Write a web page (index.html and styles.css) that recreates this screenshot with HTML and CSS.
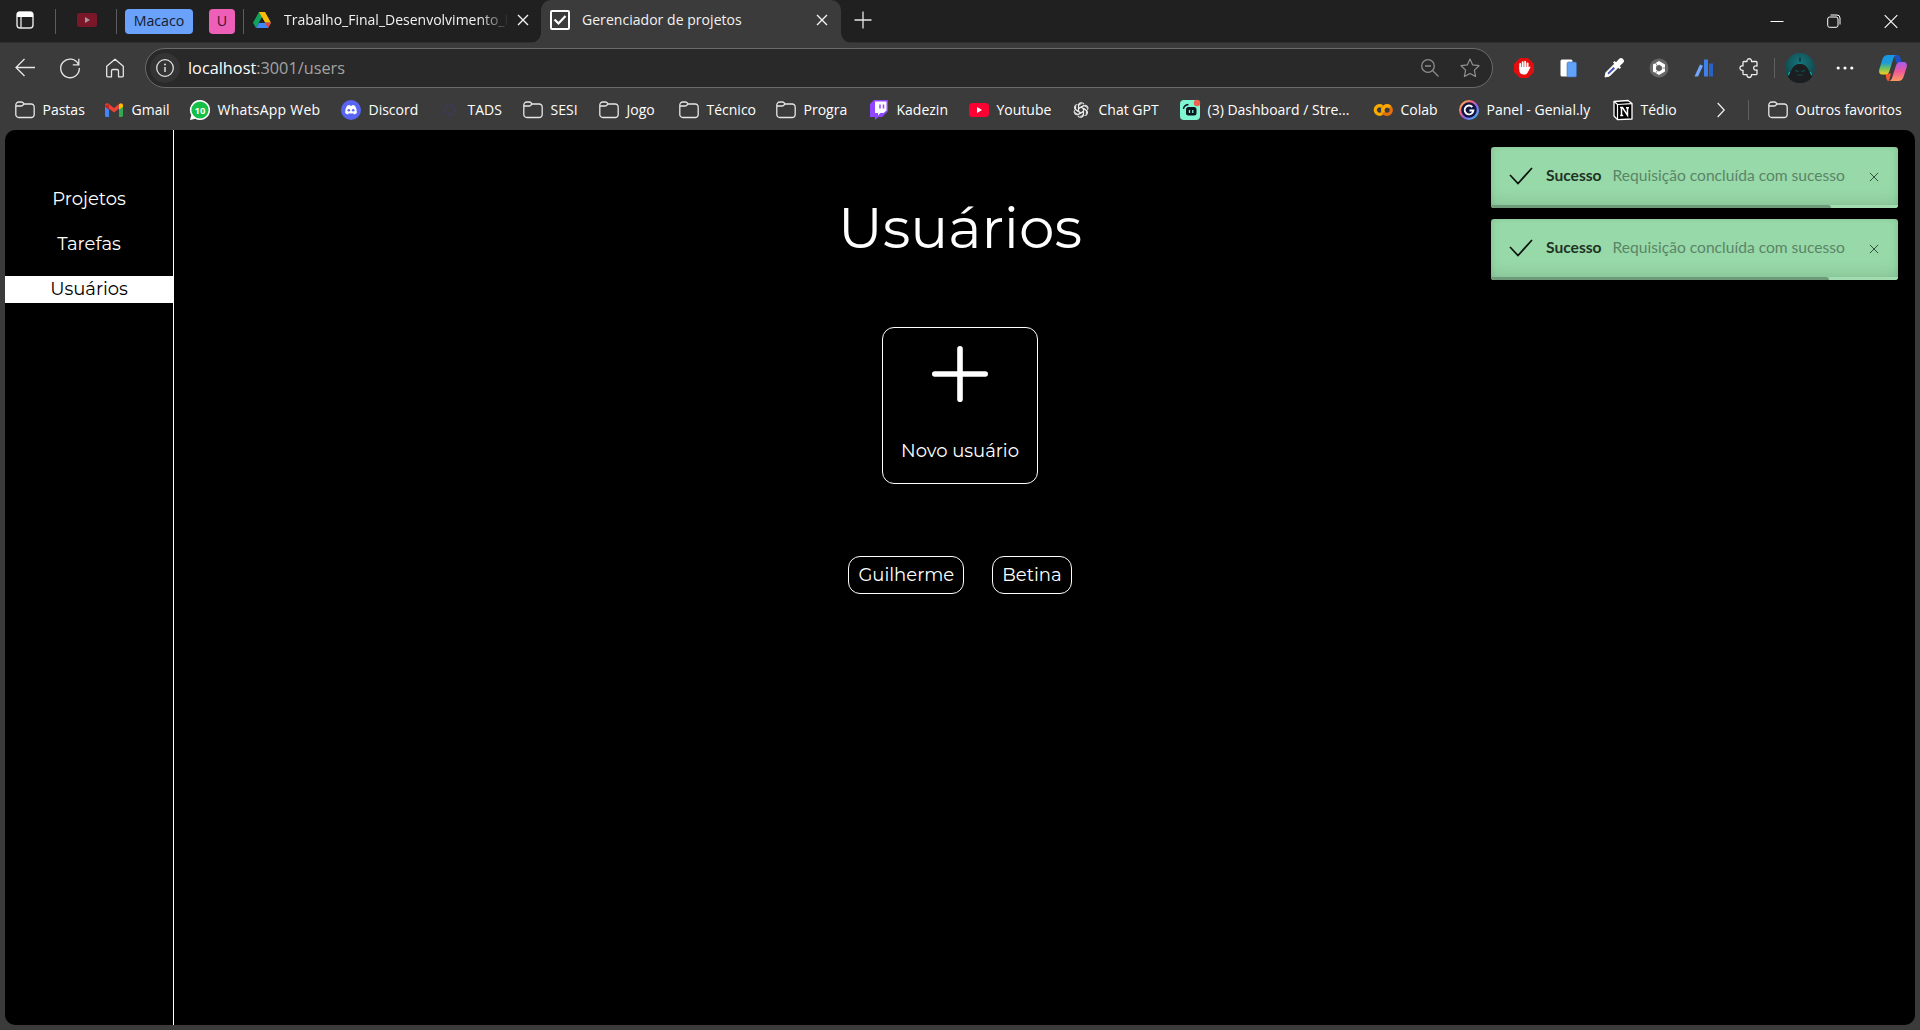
FILE: index.html
```html
<!DOCTYPE html>
<html lang="pt-BR">
<head>
<meta charset="utf-8">
<title>Gerenciador de projetos</title>
<link rel="stylesheet" href="styles.css">
</head>
<body>
<svg class="defs" width="0" height="0">
  <defs>
    <symbol id="folder" viewBox="0 0 20 20"><path d="M.8 5a3 3 0 0 1 3-3h2.700c.7 0 1.100.3 1.500.7l1.300 1.300H16a3 3 0 0 1 3.200 3v7.500a3 3 0 0 1-3.200 3H3.800a3 3 0 0 1-3-3zM.8 6h5.200c.8 0 1.200-.2 1.700-.7L9.300 4" fill="none" stroke="#e6e6e6" stroke-width="1.300"/></symbol>
    <symbol id="x" viewBox="0 0 12 12"><path d="M1 1l10 10M11 1L1 11" fill="none" stroke="currentColor" stroke-width="1.400"/></symbol>
    <linearGradient id="rainbow" x1="0" y1="0" x2="1" y2="1"><stop offset="0" stop-color="#f7c64a"/><stop offset=".35" stop-color="#f0617e"/><stop offset=".6" stop-color="#8a63f5"/><stop offset="1" stop-color="#37c8f0"/></linearGradient>
    <linearGradient id="cop1" x1="0" y1="0" x2="0" y2="1"><stop offset="0" stop-color="#1596e4"/><stop offset=".4" stop-color="#1f9bd8"/><stop offset=".7" stop-color="#74c35c"/><stop offset="1" stop-color="#f5d020"/></linearGradient>
    <linearGradient id="cop2" x1="0" y1="0" x2="0" y2="1"><stop offset="0" stop-color="#a55bf0"/><stop offset=".5" stop-color="#f0589a"/><stop offset="1" stop-color="#ff9a5d"/></linearGradient>
    <radialGradient id="face" cx=".5" cy=".35" r=".7"><stop offset="0" stop-color="#15777d"/><stop offset="1" stop-color="#123c40"/></radialGradient>
  </defs>
</svg>

<div class="window">
  <header class="tabstrip">
    <div class="tools">
      <svg class="workspace" width="20" height="20" viewBox="0 0 20 20"><rect x="2" y="2" width="16" height="16" rx="3" fill="none" stroke="#e6e6e6" stroke-width="1.400"/><path d="M2 7V4.500A2.500 2.500 0 0 1 4.500 2h11A2.500 2.500 0 0 1 18 4.500V7z" fill="#fff"/><path d="M6 7v11" stroke="#e6e6e6" stroke-width="1.300"/></svg>
      <i class="sep"></i>
      <svg class="pinned" width="20" height="14" viewBox="0 0 20 14"><rect width="20" height="14" rx="3" fill="#7c1629"/><path d="M8 4l5 3-5 3z" fill="#a8969a"/></svg>
      <i class="sep"></i>
      <span class="group blue">Macaco</span>
      <span class="group pink">U</span>
      <i class="sep last"></i>
    </div>
    <div class="tab">
      <svg width="18" height="16" viewBox="0 0 18 16"><path d="M6 0h6L9 5.400 3 16 0 10.700z" fill="#12a15b"/><path d="M6 0h6l6 10.700h-6z" fill="#fbbc05"/><path d="M6 10.700h12L15 16H3z" fill="#4285f4"/><path d="M12 10.700h6L15 16z" fill="#ea4335"/><path d="M9 5.400l3 5.300H6z" fill="#202020"/></svg>
      <span class="tab-title faded">Trabalho_Final_Desenvolvimento_F</span>
      <svg class="tab-close" width="12" height="12"><use href="#x"/></svg>
    </div>
    <div class="tab active">
      <svg width="20" height="20" viewBox="0 0 20 20"><rect x="1" y="1" width="18" height="18" rx="1" fill="none" stroke="#fff" stroke-width="2"/><path d="M4.500 9.500l4 4 7-7.500" fill="none" stroke="#fff" stroke-width="2.200"/></svg>
      <span class="tab-title">Gerenciador de projetos</span>
      <svg class="tab-close" width="12" height="12"><use href="#x"/></svg>
    </div>
    <svg class="newtab" width="18" height="18" viewBox="0 0 18 18"><path d="M9 .5v17M.5 9h17" stroke="#e6e6e6" stroke-width="1.300"/></svg>
    <div class="controls">
      <svg width="14" height="14" viewBox="0 0 14 14"><path d="M.5 7.500h13" stroke="#fff"/></svg>
      <svg width="14" height="14" viewBox="0 0 14 14"><g fill="none" stroke="#fff"><rect x=".7" y="3" width="10.300" height="10.300" rx="2"/><path d="M3.500 1h6.500a3 3 0 0 1 3 3v6.500"/></g></svg>
      <svg width="14" height="14" viewBox="0 0 14 14"><path d="M.7 1.200l12.600 12.600M13.300 1.200L.7 13.800" stroke="#fff" stroke-width="1.100"/></svg>
    </div>
  </header>

  <nav class="toolbar">
    <div class="nav-icons">
      <svg width="20" height="20" viewBox="0 0 20 20"><path d="M20 9.500H1M9.500 1L1 9.500 9.500 18" fill="none" stroke="#e6e6e6" stroke-width="1.300"/></svg>
      <svg width="20" height="20" viewBox="0 0 20 20"><path d="M18.500 6.600A9.300 9.300 0 1 0 19.300 10M18.800.8v6h-6" fill="none" stroke="#e6e6e6" stroke-width="1.300"/></svg>
      <svg width="20" height="20" viewBox="0 0 20 20"><path d="M10 1.200L1.700 8.300V18c0 .6.300.8.800.8h4V13c0-1 .5-1.500 1.500-1.500h4c1 0 1.500.5 1.500 1.500v5.800h4c.5 0 .8-.2.800-.8V8.300z" fill="none" stroke="#e6e6e6" stroke-width="1.300" stroke-linejoin="round"/></svg>
    </div>
    <div class="address">
      <span class="info"><svg width="18" height="18" viewBox="0 0 18 18"><circle cx="9" cy="9" r="8.300" fill="none" stroke="#e0e0e0" stroke-width="1.300"/><path d="M9 8v5" stroke="#e0e0e0" stroke-width="1.500"/><circle cx="9" cy="5.500" r="1" fill="#e0e0e0"/></svg></span>
      <span class="url"><b>localhost</b>:3001/users</span>
      <svg class="mag" width="18" height="18" viewBox="0 0 18 18"><path d="M11.500 11.500l6 6M4 7h6" stroke="#8c8c8c" stroke-width="1.300"/><circle cx="7" cy="7" r="6.300" fill="none" stroke="#8c8c8c" stroke-width="1.300"/></svg>
      <svg width="20" height="20" viewBox="0 0 20 20"><path d="M10 1l2.700 5.900 6.300.8-4.600 4.400 1.200 6.400L10 15.400l-5.600 3.100 1.200-6.400L1 7.700l6.300-.8z" fill="none" stroke="#909090" stroke-width="1.200" stroke-linejoin="round"/></svg>
    </div>
    <div class="extensions">
      <svg width="20" height="20" viewBox="0 0 20 20"><path d="M6 0h8l6 6v8l-6 6H6l-6-6V6z" fill="#e40d0d"/><path d="M6.200 10V6M8.700 10V4.200M11.200 10V3.800M13.600 10V5.500" stroke="#fff" stroke-width="1.900" stroke-linecap="round"/><path d="M5.300 9h9.200l1.200-.6c.8 0 .9.700.5 1.300L14 14c-.8 1.700-2 2.600-4 2.600-3 0-4.700-1.600-4.700-4.600z" fill="#fff"/></svg>
      <svg width="20" height="20" viewBox="0 0 20 20"><rect x="1.500" y="1.500" width="12" height="17" rx="1.500" fill="#fff"/><rect x="8" y="4" width="9.500" height="15" rx="1.500" fill="#62a2f8" stroke="#3b6fb8" stroke-width=".6"/></svg>
      <svg width="20" height="20" viewBox="0 0 20 20"><path d="M1 19l1-4.500L11 5.500l3.500 3.500-9 9z" fill="#fff" stroke="#fff"/><path d="M4.500 16.500l-1-1.500 6-6 1.500 1.500z" fill="#3b50b8"/><path d="M9 4.500l6.500 6.500 1.500-1.500-1.200-1.500L19 5a2.600 2.600 0 0 0-4-4l-3 3.200L10.500 3z" fill="#fff"/></svg>
      <svg width="20" height="20" viewBox="0 0 20 20"><circle cx="10" cy="10" r="9.500" fill="#666"/><path d="M10 3l6 3.500v7L10 17l-6-3.500v-7z" fill="#fff"/><path d="M10 6.700l2.900 1.700v3.400L10 13.500l-2.900-1.700V8.400z" fill="#5c5c5c"/><path d="M5.500 3.500l3 4.500M16.500 10h-3M5.500 16.500l3-4" stroke="#666" stroke-width=".8"/></svg>
      <svg width="20" height="20" viewBox="0 0 20 20"><path d="M6 6.500l3 1.300L4 18.500H.5z" fill="#71a7ff"/><path d="M10 1.500h4v17h-4z" fill="#3e80ee"/><path d="M15 5.500h4v13h-4z" fill="#2a62c4"/></svg>
      <svg width="20" height="20" viewBox="0 0 20 20"><path d="M5 3.500h3c-.5-3.700 5-3.700 4.500 0H17c.7 0 1 .3 1 1V8c-4.500-1-4.500 5 0 4v3.500c0 .8-.3 1.200-1 1.200h-4.500c.5 3.700-5 3.700-4.500 0H5c-.7 0-1-.4-1-1.200V12.300c-4 .5-4-5 0-4.500V4.500c0-.7.3-1 1-1z" fill="none" stroke="#ececec" stroke-width="1.300" stroke-linejoin="round"/></svg>
    </div>
    <i class="tool-sep"></i>
    <svg class="avatar" width="30" height="30" viewBox="0 0 30 30"><circle cx="15" cy="15" r="15" fill="url(#face)"/><path d="M3 24l4-8c2-4 5-5 8-5s6 1 8 5l4 8c-3 4-7 6-12 6S6 28 3 24z" fill="#1b1d1e"/><path d="M10 17q2 2 4 1m2 0q2 1 4-1M12 22h6" fill="none" stroke="#12484c" stroke-width="1.200"/><path d="M15 4.500v4" stroke="#123033" stroke-width="1.500"/><path d="M3.500 22l1-3M26.500 22l-1-3" stroke="#15b5bd"/></svg>
    <svg class="dots" width="18" height="4" viewBox="0 0 18 4"><g fill="#fff"><circle cx="2.200" cy="2" r="1.600"/><circle cx="9" cy="2" r="1.600"/><circle cx="15.800" cy="2" r="1.600"/></g></svg>
    <svg class="copilot" width="28" height="26" viewBox="0 0 28 26"><path d="M15 0h3c2 0 3 1 3.500 3l1.200 4.500H17z" fill="#1c4fc4"/><path d="M6.500 18.500h5.500L10 26c-1.500 0-2.200-.8-2.700-2.500z" fill="#f4572f"/><path d="M18 0c-2 0-3 1-3.700 3.500L10.500 16c-.9 2.500-2 3.500-4.500 3.500H3.500C.8 19.500-.5 17.500.3 14.500l3-10C4.300 1.500 6 0 9 0z" fill="url(#cop1)"/><path d="M9.500 26c2 0 3-1 3.700-3.500L17 10.500c.9-2.500 2-3.500 4.500-3.500h3c2.700 0 4 2 3.200 5l-3 9.500c-1 3-2.700 4.500-5.700 4.500z" fill="url(#cop2)"/></svg>
  </nav>

  <nav class="bookmarks">
    <a><svg width="20" height="20"><use href="#folder"/></svg>Pastas</a>
    <a><svg width="20" height="20" viewBox="0 0 20 20"><path d="M1 5l4 3v9H2.300C1.400 17 1 16.500 1 15.800z" fill="#4285f4"/><path d="M15 8l4-3v10.800c0 .7-.4 1.200-1.300 1.200H15z" fill="#34a853"/><path d="M1 5.500C1 3.500 3 2.700 4.500 3.800L10 8l5.500-4.200C17 2.700 19 3.500 19 5.500l-9 7z" fill="#ea4335"/><path d="M15 4.200C17 2.700 19 3.500 19 5.500v1.300l-4 3z" fill="#fbbc04"/><path d="M1 5.500v1.300l4 3V4.200z" fill="#c5221f"/></svg>Gmail</a>
    <a class="wide"><svg width="20" height="20" viewBox="0 0 20 20"><path d="M10 0a10 10 0 1 1-4.800 18.700L0 20l1.300-5A10 10 0 0 1 10 0z" fill="#fff"/><circle cx="10" cy="10" r="8.600" fill="#14c047"/><text class="badge" x="10" y="13.700" text-anchor="middle">10</text></svg>WhatsApp Web</a>
    <a><svg width="20" height="20" viewBox="0 0 20 20"><circle cx="10" cy="10" r="10" fill="#5865f2"/><path d="M6 5.800q1.300-.7 2.600-.8l.4.800h2l.4-.8q1.300.1 2.600.8 2.200 3.500 1.900 7.200-1.500 1.200-3 1.500l-.7-1.200q-2.200.5-4.400 0l-.7 1.200q-1.500-.3-3-1.500Q3.800 9.300 6 5.800z" fill="#fff"/><circle cx="7.800" cy="10.300" r="1.300" fill="#5865f2"/><circle cx="12.200" cy="10.300" r="1.300" fill="#5865f2"/></svg>Discord</a>
    <a><svg width="20" height="20" viewBox="0 0 20 20"><circle cx="9.500" cy="10" r="4.800" fill="none" stroke="#3f3a58" stroke-width="3" stroke-dasharray="2 1.770"/></svg>TADS</a>
    <a><svg width="20" height="20"><use href="#folder"/></svg>SESI</a>
    <a><svg width="20" height="20"><use href="#folder"/></svg>Jogo</a>
    <a><svg width="20" height="20"><use href="#folder"/></svg>Técnico</a>
    <a><svg width="20" height="20"><use href="#folder"/></svg>Progra</a>
    <a><svg width="20" height="20" viewBox="0 0 20 20"><path d="M5 0h14v11l-6 6h-3.500L6 20v-3H1V4z" fill="#9146ff"/><path d="M6 1.500h11.500v9L14.500 13h-3L9 15.500V13H6z" fill="#fff"/><path d="M11 4.500v4M14.500 4.500v4" stroke="#9146ff" stroke-width="1.500"/></svg>Kadezin</a>
    <a><svg width="20" height="20" viewBox="0 0 20 20"><rect y="3" width="20" height="14" rx="3.500" fill="#f03"/><path d="M8 7l5 3-5 3z" fill="#fff"/></svg>Youtube</a>
    <a><svg width="20" height="20" viewBox="0 0 20 20"><g transform="translate(1.200 1.200) scale(.88)" fill="none" stroke="#e8e8e8" stroke-width="1.300"><path id="petal" d="M7.200 12V5.200a3.300 3.300 0 0 1 6.200-1.700M7.200 8.300l4.700-2.700a3.300 3.300 0 0 1 4.700 1.700"/><use href="#petal" transform="rotate(60 10 10)"/><use href="#petal" transform="rotate(120 10 10)"/><use href="#petal" transform="rotate(180 10 10)"/><use href="#petal" transform="rotate(240 10 10)"/><use href="#petal" transform="rotate(300 10 10)"/></g></svg>Chat GPT</a>
    <a><svg width="20" height="20" viewBox="0 0 20 20"><rect width="20" height="20" rx="4" fill="#80f5d2"/><rect x="6" y="7" width="10.500" height="8.500" rx="2.500" fill="#09161d"/><path d="M3.500 9q.5-4 5-4.500" fill="none" stroke="#09161d" stroke-width="1.400"/><path d="M9.500 10v3M12.800 10v3" stroke="#80f5d2" stroke-width="1.300"/><circle cx="17" cy="3" r="3.200" fill="#f0604d"/></svg>(3) Dashboard / Stre...</a>
    <a><svg width="20" height="20" viewBox="0 0 20 20"><g fill="none" stroke-width="3.200"><path d="M9.300 13.300a4.300 4.300 0 1 1 0-6.600" stroke="#f9ab00"/><circle cx="14" cy="10" r="4.300" stroke="#e8710a"/><path d="M10.500 12.500A4.300 4.300 0 0 1 17 7" stroke="#f9ab00"/></g></svg>Colab</a>
    <a><svg width="20" height="20" viewBox="0 0 20 20"><circle cx="10" cy="10" r="8.900" fill="#10153f" stroke="url(#rainbow)" stroke-width="2.200"/><path d="M13.300 7A4.400 4.400 0 1 0 14.400 10.500H10.500" fill="none" stroke="#fff" stroke-width="1.900"/></svg>Panel - Genial.ly</a>
    <a><svg width="20" height="20" viewBox="0 0 20 20"><path d="M1 1.500L15 .5l4 3V19L4.500 19.600 1 16z" fill="#000" stroke="#fff" stroke-width="1.300" stroke-linejoin="round"/><path d="M1 1.500l3.500 3L19 3.700M4.500 4.500v15" fill="none" stroke="#fff" stroke-width="1.200"/><path d="M7.200 15.500h3M8.500 15.500V8M7 7.500h2.500l5 7.800V8M13 7.700h3" fill="none" stroke="#fff" stroke-width="1.500"/></svg>Tédio</a>
    <svg class="more" width="8" height="16" viewBox="0 0 8 16"><path d="M.7 1l6.500 7-6.500 7" fill="none" stroke="#ececec" stroke-width="1.300"/></svg>
    <i class="mark-sep"></i>
    <a><svg width="20" height="20"><use href="#folder"/></svg>Outros favoritos</a>
  </nav>

  <div class="page">
    <aside class="sidebar">
      <a>Projetos</a>
      <a>Tarefas</a>
      <a class="current">Usuários</a>
    </aside>
    <main class="content">
      <h1>Usuários</h1>
      <button class="new-user">
        <svg width="56" height="56" viewBox="0 0 56 56"><path d="M28 2.800v50.400M2.800 28h50.400" stroke="#fff" stroke-width="5.600" stroke-linecap="round"/></svg>
        <span>Novo usuário</span>
      </button>
      <div class="users">
        <span class="user">Guilherme</span>
        <span class="user">Betina</span>
      </div>
    </main>
    <section class="toasts">
      <div class="toast">
        <svg width="24" height="18" viewBox="0 0 24 18"><path d="M1 8l8 8.500L23 1" fill="none" stroke="#0c120e" stroke-width="1.700"/></svg>
        <strong>Sucesso</strong><span class="message">Requisição concluída com sucesso</span>
        <svg class="dismiss" width="10" height="10" viewBox="0 0 12 12"><path d="M1 1l10 10M11 1L1 11" stroke="#34503c" stroke-width="1.200"/></svg>
        <div class="progress"><div style="width:83.500%"></div></div>
      </div>
      <div class="toast">
        <svg width="24" height="18" viewBox="0 0 24 18"><path d="M1 8l8 8.500L23 1" fill="none" stroke="#0c120e" stroke-width="1.700"/></svg>
        <strong>Sucesso</strong><span class="message">Requisição concluída com sucesso</span>
        <svg class="dismiss" width="10" height="10" viewBox="0 0 12 12"><path d="M1 1l10 10M11 1L1 11" stroke="#34503c" stroke-width="1.200"/></svg>
        <div class="progress"><div style="width:83%"></div></div>
      </div>
    </section>
  </div>
</div>
</body>
</html>
```
FILE: styles.css
```css
* { box-sizing: border-box; }
html, body { height: 100%; }
body { margin: 0; overflow: hidden; background: #3b3b3b; color: #fff; font: 14px/20px "Open Sans", "Noto Sans", sans-serif; }
svg { display: block; flex: none; overflow: visible; }
.defs { position: absolute; }
.window { display: flex; flex-direction: column; height: 1030px; }

/* Tab strip */
.tabstrip { display: flex; height: 43px; background: #202020; border-bottom: 1px solid #303030; }
.tools { display: flex; align-items: flex-start; width: 245px; padding: 9px 0 0 15px; }
.sep { width: 1px; height: 25px; background: #5c5c5c; }
.workspace { margin: 1px 20px 0 0; }
.pinned { margin: 4px 19px 0 21px; }
.group { height: 25px; border-radius: 4px; color: #141b2c; line-height: 23px; text-align: center; font-size: 14.2px; }
.blue { width: 68px; margin-left: 8px; background: #6aa1fb; }
.pink { width: 26px; margin: 0 8px 0 16px; background: #ee5fb8; color: #3a1230; }
.tab { display: flex; align-items: center; width: 296px; height: 43px; padding: 0 12px 3px 8px; color: #f2f2f2; }
.tab-title { flex: 1; margin-left: 13px; overflow: hidden; white-space: nowrap; }
.faded { -webkit-mask-image: linear-gradient(90deg, #000 195px, transparent 225px); mask-image: linear-gradient(90deg, #000 195px, transparent 225px); margin-right: 10px; }
.active { position: relative; width: 300px; padding: 0 13px 3px 9px; background: #3b3b3b; border-radius: 10px 10px 0 0; }
.active .tab-title { margin-left: 12px; letter-spacing: .04px; }
.active::before, .active::after { content: ""; position: absolute; bottom: 0; width: 10px; height: 10px; }
.active::before { left: -10px; background: radial-gradient(circle at 0 0, transparent 9.5px, #3b3b3b 10px); }
.active::after { right: -10px; background: radial-gradient(circle at 100% 0, transparent 9.5px, #3b3b3b 10px); }
.newtab { margin: 11px 0 0 13px; }
.controls { display: flex; gap: 43px; margin: 14px 22px 0 auto; }

/* Toolbar */
.toolbar { display: flex; align-items: center; height: 50px; padding-left: 15px; }
.nav-icons { display: flex; gap: 25px; width: 130px; }
.address { display: flex; align-items: center; width: 1348px; height: 40px; padding: 0 12px 0 4px; background: #292929; border: 1px solid #6b6b6b; border-radius: 20px; }
.info { display: grid; place-items: center; width: 30px; height: 30px; border-radius: 50%; background: #343434; }
.url { margin: 0 auto 0 8px; color: #a3a3a3; font-size: 16.3px; }
.url b { color: #fff; font-weight: 400; }
.mag { margin-right: 21px; }
.extensions { display: flex; gap: 25px; margin-left: 21px; }
.tool-sep { width: 1px; height: 20px; margin-left: 15px; background: #5f5f5f; }
.avatar { margin-left: 10px; }
.dots { margin-left: 21px; }
.copilot { margin-left: 25px; }

/* Favourites */
.bookmarks { display: grid; grid-template-columns: 89px 86px 151px 99px 83px 76px 80px 97px 93px 100px 102px 109px 193px 86px 154px 104px 31px 20px 152px; align-items: center; height: 37px; padding: 0 0 3px 15px; }
.bookmarks a { display: flex; align-items: center; gap: 7.5px; white-space: nowrap; }
.bookmarks .wide { letter-spacing: .25px; }
.badge { font: 700 9.5px "Open Sans", sans-serif; letter-spacing: 0; fill: #fff; }
.mark-sep { width: 1px; height: 20px; background: #5f5f5f; }

/* Page */
.page { position: relative; display: grid; grid-template-columns: 169px 1fr 169px; height: 895px; margin: 0 5px; background: #000; border-radius: 10px; overflow: hidden; font: 18px/27px Montserrat, Inter, sans-serif; }
.sidebar { display: flex; flex-direction: column; gap: 18px; padding-top: 56px; border-right: 1px solid #fff; text-align: center; }
.current { background: #fff; color: #000; }
.content { display: flex; flex-direction: column; align-items: center; }
h1 { margin: 63px 0 64px; font-size: 56.5px; font-weight: 400; line-height: 70px; }
.new-user { display: flex; flex-direction: column; align-items: center; justify-content: space-between; width: 156px; height: 157px; padding: 18px 0; background: transparent; border: 1px solid #fff; border-radius: 12px; color: inherit; font: inherit; }
.users { display: flex; gap: 28px; margin-top: 72px; }
.user { height: 38px; padding: 0 9px; border: 1px solid #fff; border-radius: 12px; line-height: 36px; }

/* Notifications */
.toasts { position: absolute; top: 17px; right: 17px; display: flex; flex-direction: column; gap: 11px; width: 407px; font: 15.6px/20px Lato, sans-serif; }
.toast { position: relative; display: flex; align-items: center; height: 61px; padding: 0 19px 3px 18px; background: #97d9a8; border-radius: 3px; overflow: hidden; box-shadow: inset 0 -10px 20px -10px rgba(0, 0, 0, .2), inset 0 0 5px rgba(0, 0, 0, .1); }
.toast strong { margin: 0 0 2px 13px; color: #1f3326; font-weight: 700; }
.message { margin: 0 0 2px 11px; color: #5b8567; }
.dismiss { margin: 2px 0 0 auto; }
.progress { position: absolute; left: 0; right: 0; bottom: 0; height: 3px; background: #a2dbb0; }
.progress div { height: 3px; background: #6d9a79; border-top-right-radius: 3px; }
```
